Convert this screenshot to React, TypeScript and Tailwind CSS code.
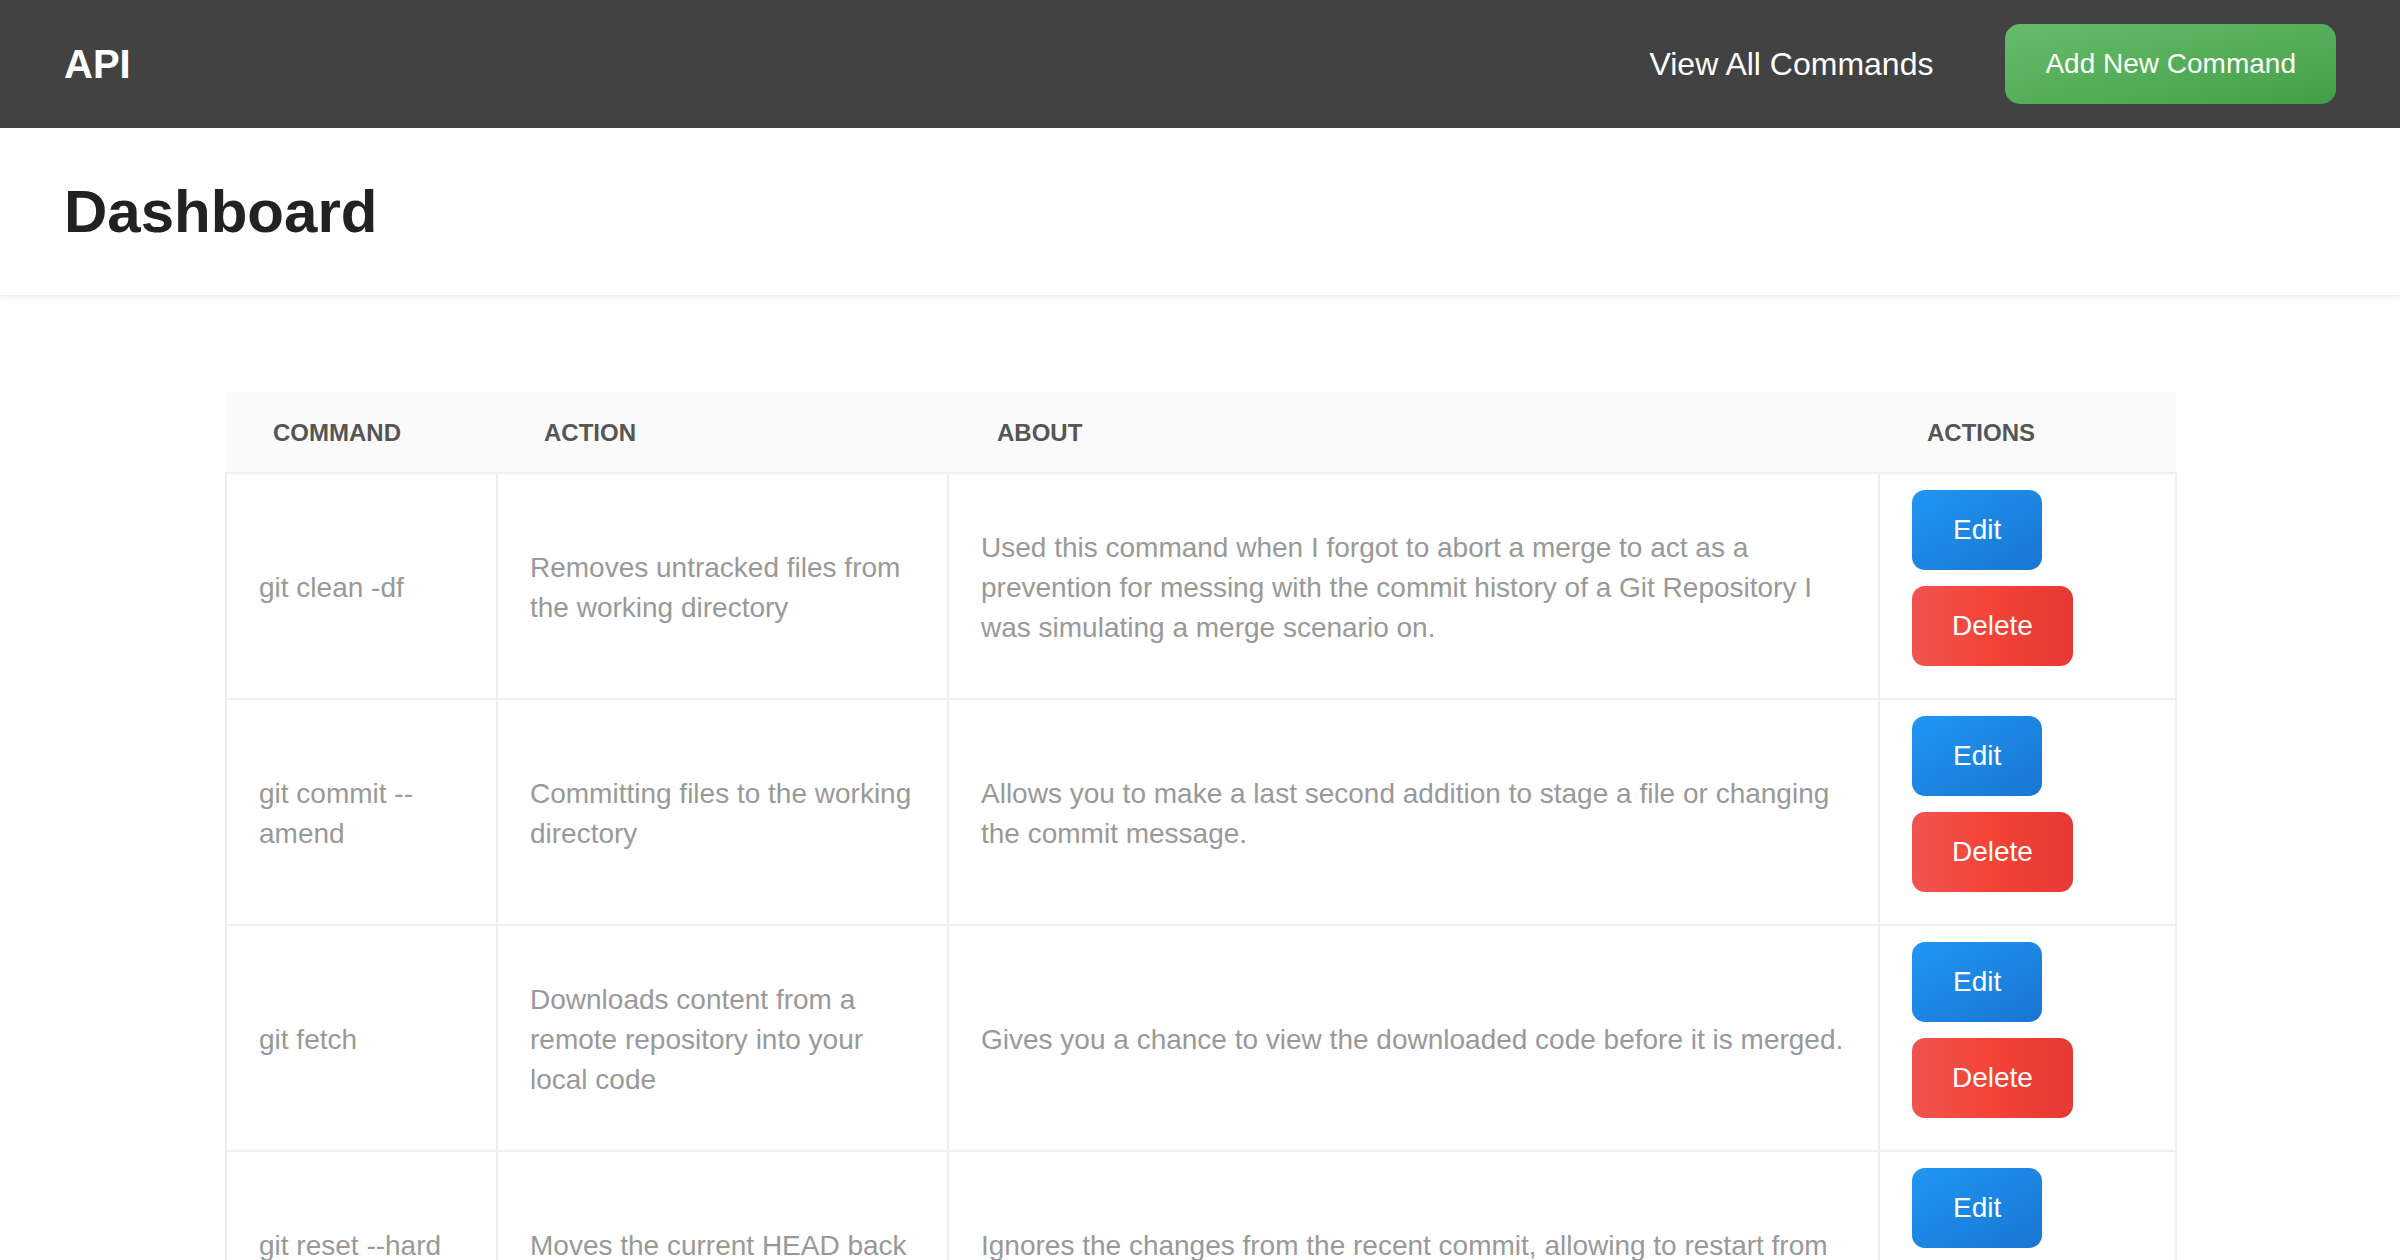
const rows = [
  {
    command: "git clean -df",
    action: "Removes untracked files from the working directory",
    about:
      "Used this command when I forgot to abort a merge to act as a prevention for messing with the commit history of a Git Repository I was simulating a merge scenario on.",
  },
  {
    command: "git commit --amend",
    action: "Committing files to the working directory",
    about: "Allows you to make a last second addition to stage a file or changing the commit message.",
  },
  {
    command: "git fetch",
    action: "Downloads content from a remote repository into your local code",
    about: "Gives you a chance to view the downloaded code before it is merged.",
  },
  {
    command: "git reset --hard HEAD~1",
    action: "Moves the current HEAD back one commit",
    about: "Ignores the changes from the recent commit, allowing to restart from the previous one.",
  },
];

function Navbar() {
  return (
    <header className="flex h-[128px] items-center justify-between bg-[#424242] px-[64px]">
      <div className="text-[40px] font-bold text-white">API</div>
      <nav className="flex items-center gap-[72px]">
        <a href="#" className="text-[32px] text-white">
          View All Commands
        </a>
        <a
          href="#"
          className="rounded-[15px] bg-gradient-to-br from-[#66bb6a] to-[#43a047] px-[40px] py-[24px] text-[28px] leading-[32px] text-white"
        >
          Add New Command
        </a>
      </nav>
    </header>
  );
}

export default function App() {
  return (
    <div className="min-h-screen bg-[#fefefe] font-['Liberation_Sans',Arial,sans-serif]">
      <Navbar />
      <div className="flex h-[167px] items-center bg-white px-[64px] shadow-[0_2px_5px_rgba(0,0,0,0.08)]">
        <h1 className="text-[60px] font-bold text-[#222]">Dashboard</h1>
      </div>

      <main className="px-[225px] pt-[97px]">
        <table className="w-full table-fixed border-collapse">
          <colgroup>
            <col className="w-[271px]" />
            <col className="w-[451px]" />
            <col className="w-[931px]" />
            <col className="w-[297px]" />
          </colgroup>
          <thead>
            <tr className="h-[81px] border-b-2 border-[#eeeeee] bg-[#fafafa] text-left text-[24px] font-bold uppercase text-[#555]">
              <th className="pl-[47px] pt-[2px]">Command</th>
              <th className="pl-[47px] pt-[2px]">Action</th>
              <th className="pl-[49px] pt-[2px]">About</th>
              <th className="pl-[48px] pt-[2px]">Actions</th>
            </tr>
          </thead>
          <tbody className="text-[28px] leading-[40px] text-[#999]">
            {rows.map((row) => (
              <tr key={row.command} className="bg-white">
                <td className="border-2 border-[#eeeeee] px-[32px] pt-[3px] align-middle">{row.command}</td>
                <td className="border-2 border-[#eeeeee] px-[32px] pt-[3px] align-middle">{row.action}</td>
                <td className="border-2 border-[#eeeeee] pl-[32px] pr-[28px] pt-[3px] align-middle">{row.about}</td>
                <td className="border-2 border-[#eeeeee] px-[32px] pt-[16px] pb-[16px] align-top">
                  <button className="mb-[16px] block rounded-[13px] bg-gradient-to-br from-[#2196f3] to-[#1976d2] px-[41px] py-[24px] text-[28px] leading-[32px] text-white">
                    Edit
                  </button>
                  <button className="mb-[16px] block rounded-[13px] bg-gradient-to-r from-[#ef5350] via-[#f44336] to-[#e53935] px-[40px] py-[24px] text-[28px] leading-[32px] text-white">
                    Delete
                  </button>
                </td>
              </tr>
            ))}
          </tbody>
        </table>
      </main>
    </div>
  );
}
